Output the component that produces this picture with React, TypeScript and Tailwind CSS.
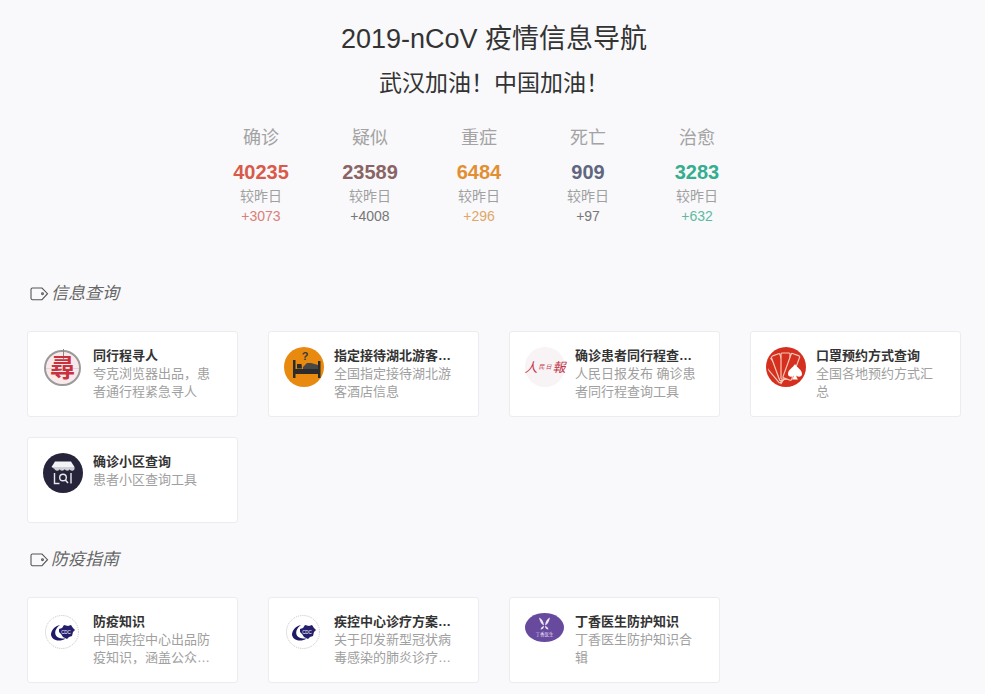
import React from "react";

const stats = [
  { label: "确诊", value: "40235", delta: "+3073", color: "text-[#d9594c]", dcolor: "text-[#d9807a]" },
  { label: "疑似", value: "23589", delta: "+4008", color: "text-[#8a6464]", dcolor: "text-[#777777]" },
  { label: "重症", value: "6484", delta: "+296", color: "text-[#e28f34]", dcolor: "text-[#e0a766]" },
  { label: "死亡", value: "909", delta: "+97", color: "text-[#5f6780]", dcolor: "text-[#777777]" },
  { label: "治愈", value: "3283", delta: "+632", color: "text-[#35ad8f]", dcolor: "text-[#5fb9a2]" },
];

function TagIcon() {
  return (
    <svg width="19" height="14" viewBox="0 0 19 14" fill="none" stroke="#555" strokeWidth="1.1" className="shrink-0">
      <path d="M2.5 1h9.5l5.500 5.700-5.500 6H2.500A1.600 1.600 0 0 1 1 11V2.600A1.600 1.600 0 0 1 2.500 1z" />
      <circle cx="12.500" cy="6.800" r="0.900" />
    </svg>
  );
}

function XunIcon() {
  return (
    <div className="relative w-[37px] h-[36px] ml-px mt-[3px] rounded-full bg-[#fae9ea] border-2 border-[#9a9a9a] flex items-center justify-center">
      <div className="absolute left-1/2 -top-[3px] h-[10px] w-px bg-[#8f8484]" />
      <div className="absolute top-1/2 left-0 right-0 h-px bg-[#e3d3d4]" />
      <span className="relative text-[25px] leading-none font-bold text-[#c8323f]">尋</span>
    </div>
  );
}

function BedIcon() {
  return (
    <svg width="40" height="40" viewBox="0 0 40 40">
      <circle cx="20" cy="20" r="20" fill="#e98a10" />
      <text x="21" y="13" textAnchor="middle" fontSize="11" fontWeight="700" fill="#3a3a3a" fontFamily="Liberation Sans, sans-serif">?</text>
      <path d="M9 13h2.500v9H34v-8h2.500v17H34v-4H11.500v4H9z" fill="#2b2b2b" />
      <path d="M13 17h4.500l.5 4.500h-5z" fill="#2b2b2b" />
      <path d="M19 20l4-4h4l7 2v4H19z" fill="#474747" />
    </svg>
  );
}

function PeopleDailyIcon() {
  return (
    <div className="w-10 h-10 rounded-full bg-[#f8f3f4] flex items-center justify-center">
      <span className="flex items-center text-[#c2334a] italic leading-none whitespace-nowrap font-['Liberation_Serif','Noto_Sans_CJK_SC',serif]">
        <span className="text-[13px]">人</span>
        <span className="text-[6px] mx-[1px]">民</span>
        <span className="text-[6px] mr-[1px]">日</span>
        <span className="text-[13px]">報</span>
      </span>
    </div>
  );
}

function CardsIcon() {
  const angles = [-60, -40, -20, 0, 20];
  return (
    <svg width="40" height="40" viewBox="0 0 40 40">
      <defs>
        <clipPath id="fan-clip">
          <circle cx="20" cy="20" r="18" />
        </clipPath>
      </defs>
      <circle cx="20" cy="20" r="20" fill="#d5301f" />
      <g clipPath="url(#fan-clip)" fill="#d5301f" stroke="#f7c9b8" strokeWidth="1.200" strokeLinejoin="round">
        {angles.map((a) => (
          <rect key={a} x="15" y="6" width="9" height="26" rx="1" transform={`rotate(${a} 20 36)`} />
        ))}
      </g>
      <path d="M29 17c1.800 3.500 7 5.500 7 10 0 2.800-3.500 3.800-5.700 1.600.2 1.700.8 2.800 1.700 3.900h-6c.9-1.100 1.500-2.200 1.700-3.900-2.200 2.200-5.700 1.200-5.700-1.600 0-4.500 5.200-6.500 7-10z" fill="#fff" />
    </svg>
  );
}

function ShopIcon() {
  return (
    <svg width="40" height="40" viewBox="0 0 40 40">
      <circle cx="20" cy="20" r="20" fill="#26243a" />
      <path d="M12 8.500h16l3.500 5.500h-23z" fill="#f3f3f5" />
      <path d="M8.500 14h23v2c0 1.400-1.700 1.700-2.600 1.700-1 0-2-.6-2.200-1.400-.2.800-1.200 1.400-2.400 1.400-1.100 0-2.200-.6-2.600-1.400-.4.800-1.500 1.400-2.600 1.400s-2-.6-2.400-1.400c-.3.800-1.200 1.400-2.200 1.400-.9 0-3-.3-3-1.700z" fill="#cfcfd6" />
      <path d="M11.500 20v10.500h5M28 20v10.500" fill="none" stroke="#e8e8ec" strokeWidth="1.400" />
      <circle cx="20" cy="24.500" r="3.300" fill="none" stroke="#e8e8ec" strokeWidth="1.400" />
      <path d="M22.300 27l2.700 3" stroke="#e8e8ec" strokeWidth="1.500" />
    </svg>
  );
}

function CdcIcon() {
  return (
    <svg width="40" height="40" viewBox="0 0 40 40">
      <circle cx="19" cy="19" r="16.500" fill="#fff" stroke="#c4c4ca" strokeWidth="1" strokeDasharray="1 1" />
      <path d="M8 22c0-5 4-9 9-10-3.500 2.500-5.500 6-4.500 9.500 1 3 5 4.500 10 4-5 3.500-13 2.500-14.500-3.500z" fill="#1f1a66" />
      <path d="M16 16l3-1 2-3 4 1 3-1 2 3 2 2-2 2-1 4-3 1-2 2-4-2-2-3-2-2z" fill="#25206e" />
      <text x="23" y="21" textAnchor="middle" fontSize="4.500" fill="#ffffff" fontFamily="Liberation Sans, sans-serif">CDC</text>
    </svg>
  );
}

function DxyIcon() {
  return (
    <svg width="40" height="40" viewBox="0 0 40 40">
      <ellipse cx="19.500" cy="14.500" rx="19.500" ry="14.500" fill="#674a9e" />
      <g fill="#efe9f7">
        <path d="M19 12.500c-3-1.500-4-4-5-8 3 1.500 4.500 4 5 8z" />
        <path d="M20 12.500c3-1.500 4-4 5-8-3 1.500-4.500 4-5 8z" />
        <path d="M19 13c-2 .5-3 1.500-3.500 3.500 2 0 3.500-1.500 3.500-3.500z" />
        <path d="M20 13c2 .5 3 1.500 3.500 3.500-2 0-3.500-1.500-3.500-3.500z" />
      </g>
      <text x="19.500" y="23" textAnchor="middle" fontSize="4.500" fill="#e6def2" fontFamily="Noto Sans CJK SC, sans-serif">丁香医生</text>
    </svg>
  );
}

type CardData = { icon: React.ReactNode; title: string; desc: string };

function Card({ icon, title, desc }: CardData) {
  return (
    <div className="h-[86px] bg-white border border-[#ececf0] rounded-[3px] pl-[15px] pr-5 pt-[15px] flex gap-[10px]">
      <div className="w-10 h-10 shrink-0">{icon}</div>
      <div className="min-w-0 flex-1">
        <div className="text-[13px] leading-[18px] font-bold text-[#333333] truncate">{title}</div>
        <div className="text-[13px] leading-[18px] text-[#a0a0a0] line-clamp-2 break-all">{desc}</div>
      </div>
    </div>
  );
}

function Heading({ children }: { children: React.ReactNode }) {
  return (
    <div className="flex items-center gap-[2px] h-6 text-[17px] italic text-[#666666]">
      <TagIcon />
      <span>{children}</span>
    </div>
  );
}

const info: CardData[] = [
  { icon: <XunIcon />, title: "同行程寻人", desc: "夸克浏览器出品，患者通行程紧急寻人" },
  { icon: <BedIcon />, title: "指定接待湖北游客酒店信息", desc: "全国指定接待湖北游客酒店信息" },
  { icon: <PeopleDailyIcon />, title: "确诊患者同行程查询工具", desc: "人民日报发布 确诊患者同行程查询工具" },
  { icon: <CardsIcon />, title: "口罩预约方式查询", desc: "全国各地预约方式汇总" },
  { icon: <ShopIcon />, title: "确诊小区查询", desc: "患者小区查询工具" },
];

const guide: CardData[] = [
  { icon: <CdcIcon />, title: "防疫知识", desc: "中国疾控中心出品防疫知识，涵盖公众日常防护的内容" },
  { icon: <CdcIcon />, title: "疾控中心诊疗方案第五版", desc: "关于印发新型冠状病毒感染的肺炎诊疗方案的通知内容" },
  { icon: <DxyIcon />, title: "丁香医生防护知识", desc: "丁香医生防护知识合辑" },
];

export default function App() {
  return (
    <div className="w-[985px] h-[694px] overflow-hidden bg-[#f9f9fb] font-['Liberation_Sans','Noto_Sans_CJK_SC',sans-serif]">
      <div className="pt-[20px] flex flex-col items-center">
        <h1 className="text-[27px] leading-[38px] text-[#333333] pl-[3px]">2019-nCoV 疫情信息导航</h1>
        <h2 className="mt-[6px] text-[23px] leading-[38px] text-[#333333] pl-[3px]">武汉加油！中国加油！</h2>
      </div>
      <div className="mt-[23px] flex justify-center pr-[27px]">
        {stats.map((s) => (
          <div key={s.label} className="w-[109px] flex flex-col items-center">
            <div className="text-[18px] leading-[26px] text-[#a3a3a3]">{s.label}</div>
            <div className={`mt-[9px] text-[20px] leading-[24px] font-bold ${s.color}`}>{s.value}</div>
            <div className="mt-[2px] text-[14px] leading-[20px] text-[#a0a0a0]">较昨日</div>
            <div className={`text-[14px] leading-[20px] ${s.dcolor}`}>{s.delta}</div>
          </div>
        ))}
      </div>
      <div className="pl-[30px] mt-[56px]">
        <Heading>信息查询</Heading>
      </div>
      <div className="mt-[25px] pl-[27px] pr-[24px] grid grid-cols-4 gap-x-[30px] gap-y-[20px]">
        {info.map((c) => (
          <Card key={c.title} {...c} />
        ))}
      </div>
      <div className="pl-[30px] mt-[25px]">
        <Heading>防疫指南</Heading>
      </div>
      <div className="mt-[25px] pl-[27px] pr-[24px] grid grid-cols-4 gap-x-[30px] gap-y-[20px]">
        {guide.map((c) => (
          <Card key={c.title} {...c} />
        ))}
      </div>
    </div>
  );
}
